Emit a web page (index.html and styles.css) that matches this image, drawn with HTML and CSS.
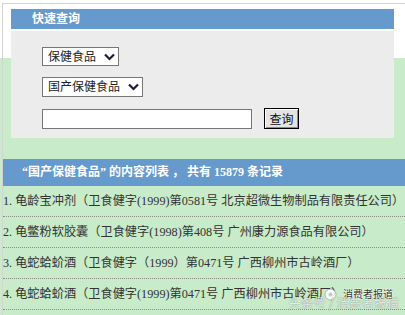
FILE: index.html
```html
<!DOCTYPE html>
<html lang="zh-CN">
<head>
    <meta charset="UTF-8">
    <title>快速查询</title>
    <link rel="stylesheet" href="styles.css">
</head>
<body>
    <div class="frame">
        <!-- Suchbereich -->
        <div class="search-panel">
            <div class="panel-title">快速查询</div>
            <div class="panel-body">
                <span class="sel">
                    <select><option>保健食品</option></select>
                    <svg width="11" height="8" viewBox="0 0 11 8"><path d="M1 1.5 L5.5 6 L10 1.5" fill="none" stroke="#1c1c3c" stroke-width="2.2"/></svg>
                </span>
                <span class="sel">
                    <select><option>国产保健食品</option></select>
                    <svg width="11" height="8" viewBox="0 0 11 8"><path d="M1 1.5 L5.5 6 L10 1.5" fill="none" stroke="#1c1c3c" stroke-width="2.2"/></svg>
                </span>
                <div class="query-row">
                    <input type="text" class="query-input">
                    <button class="query-button">查询</button>
                </div>
            </div>
        </div>

        <!-- Ergebnisliste -->
        <div class="result-list">
            <div class="list-title">“国产保健食品” 的内容列表 ， 共有 15879 条记录</div>
            <div class="row">1. 龟龄宝冲剂（卫食健字(1999)第0581号 北京超微生物制品有限责任公司）</div>
            <div class="row">2. 龟鳖粉软胶囊（卫食健字(1998)第408号 广州康力源食品有限公司）</div>
            <div class="row">3. 龟蛇蛤蚧酒（卫食健字（1999）第0471号 广西柳州市古岭酒厂）</div>
            <div class="row">4. 龟蛇蛤蚧酒（卫食健字(1999)第0471号 广西柳州市古岭酒厂）</div>

            <!-- Wasserzeichen -->
            <svg class="wm-icon" width="13" height="13" viewBox="0 0 13 13">
                <circle cx="6.5" cy="6.5" r="5.5" fill="rgba(255,255,255,0.85)" stroke="rgba(120,120,120,0.5)" stroke-width="1"/>
                <circle cx="6.5" cy="6.5" r="2" fill="rgba(150,150,150,0.5)"/>
            </svg>
            <span class="wm-small">消费者报道</span>
            <span class="wm-big">头条号 / 消费者报道</span>
        </div>
    </div>
</body>
</html>
```

FILE: styles.css
```css
body {
    margin: 0;
    padding: 3px 0 0 2px;
    font-family: "Liberation Serif", "Noto Sans CJK SC", serif;
    font-size: 12px;
    color: #333;
    background: linear-gradient(#ffffff 58px, #c8ebca 58px);
    height: 312px;
    overflow: hidden;
}
.frame {
    border-top: 1px solid #d3d3d3;
    border-left: 1px solid #d3d3d3;
    height: 400px;
}

/* Suchbereich */
.search-panel {
    margin: 5px 11px 0 8px;
}
.panel-title {
    height: 20px;
    line-height: 20px;
    padding-left: 21px;
    background-color: #6699cc;
    color: #fff;
    font-weight: bold;
}
.panel-body {
    margin-top: 2px;
    background-color: #ececec;
    height: 107px;
    box-sizing: border-box;
    padding: 16px 0 0 31px;
    display: flex;
    flex-direction: column;
    align-items: flex-start;
    gap: 11px;
}
.sel {
    display: inline-flex;
    align-items: center;
    gap: 7px;
    height: 19px;
    padding: 0 3px 0 5px;
    border: 1px solid #767676;
    background-color: #fff;
    box-sizing: border-box;
}
.sel + .sel {
    height: 20px;
}
.sel select {
    appearance: none;
    -webkit-appearance: none;
    border: none;
    padding: 0;
    margin: 0;
    background: transparent;
    font-family: inherit;
    font-size: 12px;
    color: #222;
    outline: none;
}
.query-row {
    display: flex;
    align-items: center;
    gap: 12px;
}
.query-input {
    width: 210px;
    height: 20px;
    box-sizing: border-box;
    margin: 0;
    border: 1px solid #767676;
    background-color: #fff;
}
.query-button {
    width: 35px;
    height: 21px;
    padding: 0;
    margin: 0;
    font-family: inherit;
    font-size: 12px;
    color: #111;
    border: 1px solid #000;
    background-color: #e4e4e4;
    box-shadow: inset 1px 1px #fff, inset -1px -1px #8a8a8a;
}

/* Ergebnisliste */
.result-list {
    position: relative;
    margin-top: 21px;
}
.list-title {
    height: 27px;
    line-height: 27px;
    padding-left: 19px;
    background-color: #6699cc;
    color: #fff;
    font-weight: bold;
}
.row {
    height: 30px;
    line-height: 30px;
    font-size: 12.2px;
    border-bottom: 1px dotted #8c8c8c;
    white-space: nowrap;
}

/* Wasserzeichen unten rechts */
.wm-icon {
    position: absolute;
    right: 68px;
    top: 129px;
}
.wm-small {
    position: absolute;
    right: 12px;
    top: 129px;
    font-family: "Noto Sans CJK SC", sans-serif;
    font-size: 10px;
    line-height: 12px;
    color: #333;
    text-shadow: 0 0 2px #fff, 0 0 2px #fff;
}
.wm-big {
    position: absolute;
    right: 6px;
    top: 137px;
    font-family: "Noto Sans CJK SC", sans-serif;
    font-size: 12.5px;
    line-height: 14px;
    color: rgba(255, 255, 255, 0.85);
    text-shadow: 0 0 1px rgba(0, 0, 0, 0.55);
    white-space: nowrap;
}
```
